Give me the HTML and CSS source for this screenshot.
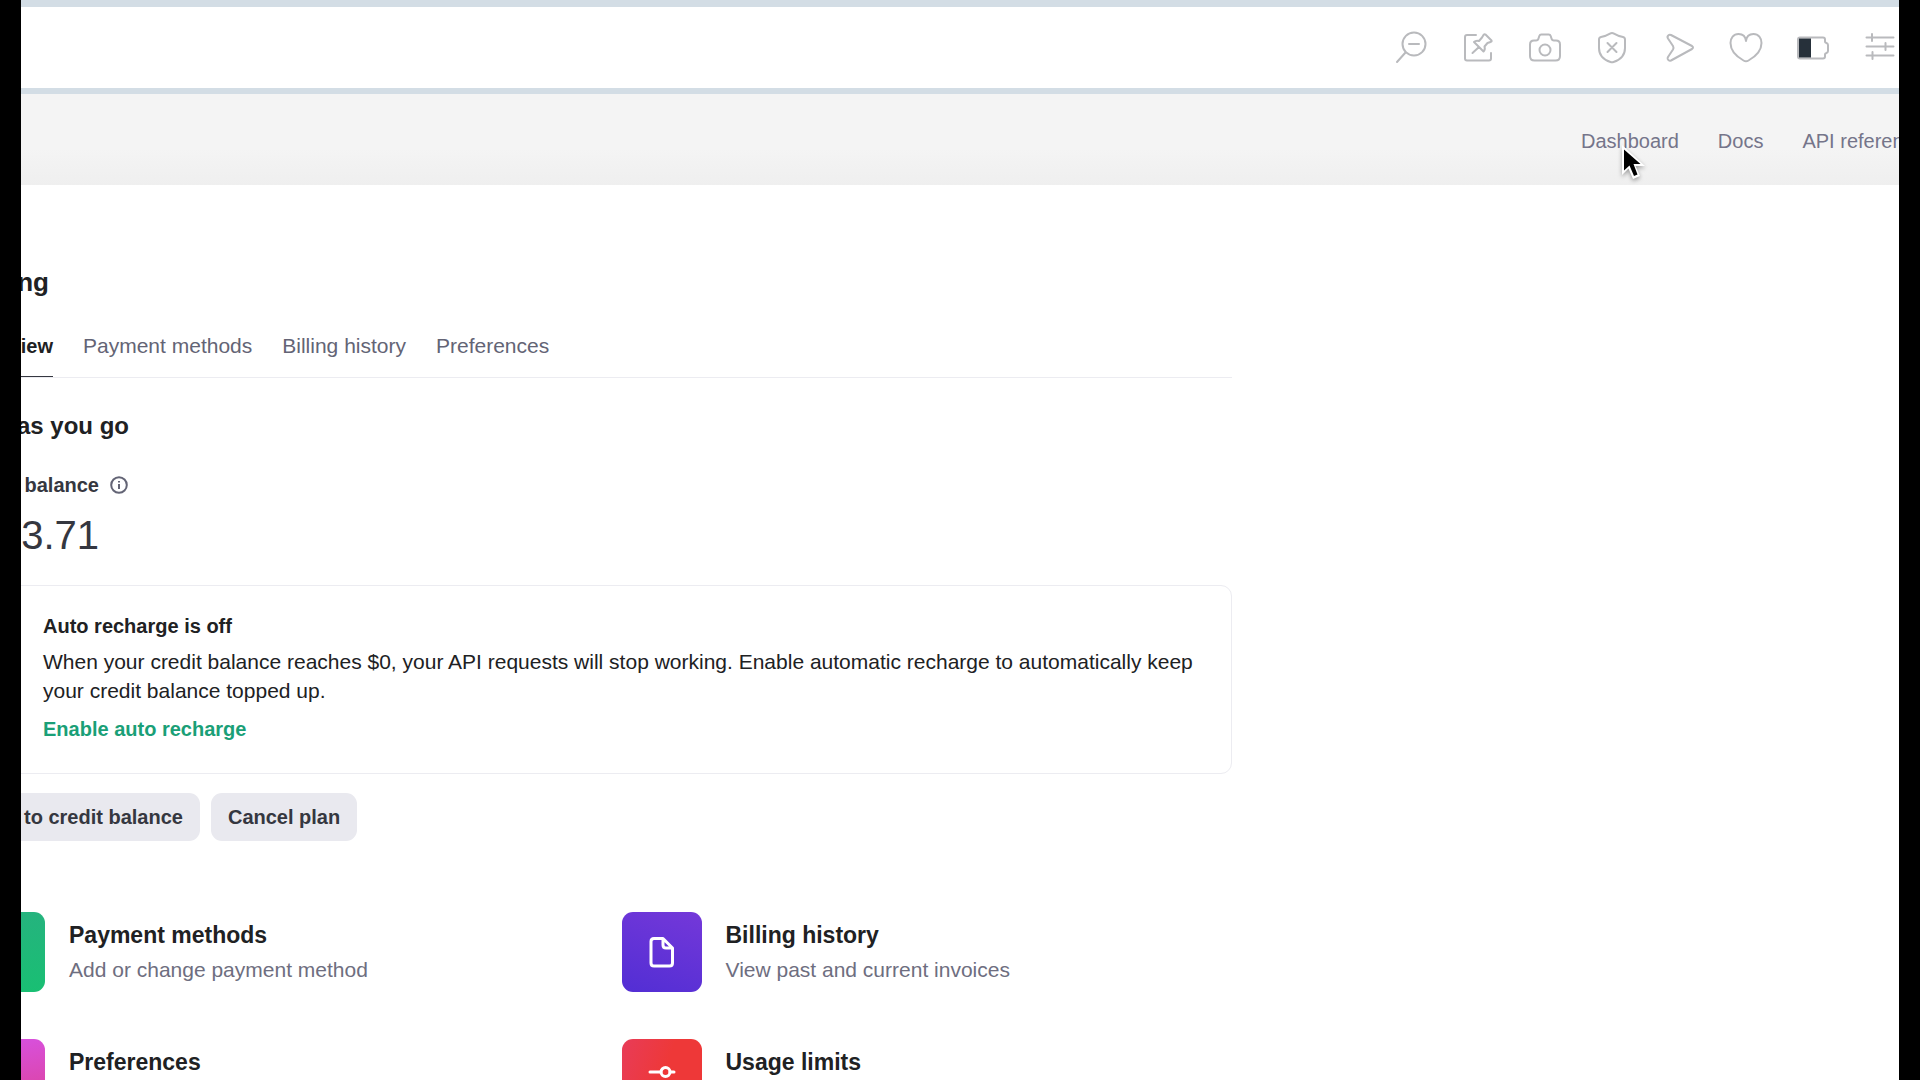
FILE: index.html
```html
<!DOCTYPE html>
<html lang="en">
<head>
<meta charset="utf-8">
<meta name="viewport" content="width=device-width, initial-scale=1">
<title>Billing</title>
<link rel="stylesheet" href="styles.css">
</head>
<body>
<div class="screen">
  <div class="toolbar">
    <button class="tool" type="button"><svg viewBox="0 0 36 36"><circle cx="21" cy="15" r="11.5"/><path d="M12.500 23.500L4 33M16 15h10"/></svg></button>
    <button class="tool" type="button"><svg viewBox="0 0 36 36"><path d="M16 6H7q-2 0-2 2v21.500q0 2 2 2h22q2 0 2-2V24M25.500 5.500l6 6q.6 1.200-1 1.500l-3 1-3 3.500q1 3-1 5L14 13q2-2 5-1l3-3.500 1.500-2.500q1-1.200 2-.5zM19 18l-6.500 6"/></svg></button>
    <button class="tool" type="button"><svg viewBox="0 0 36 36"><path d="M7 11.500h2q2 0 2.500-2l.8-2.500q.5-1.500 2-1.500h7.400q1.500 0 2 1.500l.8 2.500q.5 2 2.500 2h2q4 0 4 4V27q0 4.500-4.500 4.500h-21Q3 31.500 3 27V15.500q0-4 4-4z"/><circle cx="18" cy="21" r="5.500"/></svg></button>
    <button class="tool" type="button"><svg viewBox="0 0 36 36"><path d="M18 4q1 0 2 .6 4 2.400 9 3.400 2 .5 2 2.500V19c0 8-5 12-11.500 14q-1.500.6-3 0C10 31 5 27 5 19v-8.500Q5 8.500 7 8q5-1 9-3.400 1-.6 2-.6zM13.500 14l9 9M22.500 14l-9 9"/></svg></button>
    <button class="tool" type="button"><svg viewBox="0 0 36 36"><path d="M10 6l21 11q2 1.500 0 3L10 31.500q-2.500.8-3.300-1.500-.2-1 .3-2l5-7.500q1-1.700 0-3.500L7 9.500Q5.800 7.500 7.500 6.200q1-.8 2.500-.2z"/></svg></button>
    <button class="tool" type="button"><svg viewBox="0 0 36 36"><path d="M18 12C18.500 7 22 5 25.500 5c5 0 8 4 8 9 0 7-5 13-13 17.500q-2.500 1.500-5 0C7.500 27 2.500 21 2.500 14c0-5 3-9 8-9C14 5 17.500 7 18 12z"/></svg></button>
    <button class="tool" type="button"><svg viewBox="0 0 36 36"><path d="M5 8.500h23q2 0 2 2v2q0 1 1 1.300 2 .7 2 2.200v6q0 1.500-2 2.200-1 .3-1 1.300v2q0 2-2 2H5q-2 0-2-2v-17q0-2 2-2z"/><path class="charge" d="M4 9.500h12v19H4z"/></svg></button>
    <button class="tool" type="button"><svg viewBox="0 0 36 36"><path d="M4.500 8.500h27M4.500 17.500h27M4.500 26.500h27M10 5v7M23.500 14v7M10.500 23v7"/></svg></button>
  </div>

  <header class="site-header">
    <nav class="site-nav">
      <a class="hovered" href="#">Dashboard
        <svg class="cursor" viewBox="0 0 30 40"><path d="M4 4v30l6.500-6.500L15 38l7-3-4.500-10H27z" fill="#fff"/><path d="M6 8.500v21l5.500-5 4.500 10.500 3.500-1.500L15.500 23H22.500z" fill="#000"/></svg>
      </a>
      <a href="#">Docs</a>
      <a href="#">API referen</a>
    </nav>
  </header>

  <main class="billing">
    <h1><span>ng</span></h1>
    <nav class="tabs">
      <a class="active" href="#">iew</a>
      <a href="#">Payment methods</a>
      <a href="#">Billing history</a>
      <a href="#">Preferences</a>
    </nav>

    <h2><span>as you go</span></h2>
    <div class="label">
      <span>t balance</span>
      <svg class="info" viewBox="0 0 18 18"><circle cx="9" cy="9" r="7.800"/><path d="M9 8v5M9 5v1.500"/></svg>
    </div>
    <div class="balance">3.71</div>

    <section class="notice">
      <h3>Auto recharge is off</h3>
      <p>When your credit balance reaches $0, your API requests will stop working. Enable automatic recharge to automatically keep your credit balance topped up.</p>
      <a href="#">Enable auto recharge</a>
    </section>

    <div class="actions">
      <button class="btn cut" type="button">to credit balance</button>
      <button class="btn" type="button">Cancel plan</button>
    </div>

    <div class="tiles">
      <a class="tile" href="#">
        <span class="tile-icon green"></span>
        <span class="tile-text"><strong>Payment methods</strong><span>Add or change payment method</span></span>
      </a>
      <a class="tile" href="#">
        <span class="tile-icon purple"><svg viewBox="0 0 32 32"><path d="M8 2.500h9L26.500 12v15q0 3-3 3H8q-3 0-3-3V5.500q0-3 3-3zM17 2.500V9q0 3 3 3h6.500"/></svg></span>
        <span class="tile-text"><strong>Billing history</strong><span>View past and current invoices</span></span>
      </a>
      <a class="tile" href="#">
        <span class="tile-icon pink"></span>
        <span class="tile-text"><strong>Preferences</strong></span>
      </a>
      <a class="tile" href="#">
        <span class="tile-icon red"><svg viewBox="0 0 32 32"><circle cx="19.500" cy="9" r="4.500"/><circle cx="12" cy="23" r="4.500"/><path d="M4 9h11M24 9h4M4 23h3M17 23h11"/></svg></span>
        <span class="tile-text"><strong>Usage limits</strong></span>
      </a>
    </div>
  </main>
</div>
</body>
</html>
```
FILE: styles.css
```css
* { box-sizing: border-box; }

body {
  margin: 0;
  padding: 0 21px;
  background: #000;
  color: #202123;
  font-family: "Liberation Sans", Arial, sans-serif;
  font-size: 21px;
}

.screen {
  height: 100vh;
  overflow: hidden;
  background: #fff;
}

a { color: inherit; text-decoration: none; }
h1, h2, h3, p { margin: 0; }

/* Browser toolbar */
.toolbar {
  display: flex;
  justify-content: flex-end;
  align-items: center;
  gap: 31px;
  height: 94px;
  padding: 0 1px 2px 0;
  border-top: 7px solid #d3dde5;
  border-bottom: 6px solid #d3dde5;
}

.tool {
  flex: none;
  width: 36px;
  height: 36px;
  padding: 0;
  border: 0;
  background: none;
}

.tool svg {
  display: block;
  fill: none;
  stroke: #b9babd;
  stroke-width: 2;
  stroke-linecap: round;
  stroke-linejoin: round;
}

.tool .charge { fill: #26303a; stroke: none; }

/* Site header */
.site-header {
  height: 91px;
  padding-top: 35px;
  overflow: hidden;
  background: linear-gradient(#f4f4f4 60%, #efefef);
}

.site-nav {
  display: flex;
  gap: 39px;
  width: 318px;
  margin-left: auto;
  font-size: 20px;
  line-height: 24px;
  color: #75758a;
  white-space: nowrap;
}

.hovered { position: relative; }

.cursor {
  position: absolute;
  left: 37px;
  top: 12px;
  width: 30px;
  height: 40px;
  filter: drop-shadow(0 2px 2px rgba(0, 0, 0, .35));
}

/* Billing page */
.billing {
  max-width: 1211px;
  padding-top: 81px;
}

h1, h2 {
  display: flex;
  justify-content: flex-end;
  overflow: hidden;
  line-height: 32px;
  white-space: nowrap;
}

h1 { width: 28px; font-size: 26px; }
h2 { width: 108px; margin-top: 32px; font-size: 24px; }

.tabs {
  display: flex;
  gap: 30px;
  margin-top: 36px;
  border-bottom: 1px solid #ececf1;
  line-height: 24px;
  color: #636475;
}

.tabs a { padding-bottom: 18px; border-bottom: 1px solid transparent; }

.tabs .active {
  display: flex;
  justify-content: flex-end;
  width: 32px;
  border-color: #353740;
  color: #202123;
  font-size: 20px;
  font-weight: 700;
}

.label {
  display: flex;
  justify-content: flex-end;
  align-items: center;
  gap: 11px;
  width: 107px;
  margin-top: 31px;
  font-size: 20px;
  font-weight: 700;
  line-height: 24px;
  color: #353740;
  white-space: nowrap;
}

.info {
  flex: none;
  width: 18px;
  height: 18px;
  fill: none;
  stroke: #636475;
  stroke-width: 2;
}

.balance {
  display: flex;
  justify-content: flex-end;
  width: 78px;
  margin-top: 14px;
  font-size: 40px;
  line-height: 48px;
  color: #353740;
}

.notice {
  margin: 26px 0 0 -56px;
  padding: 26px 32px 30px 77px;
  border: 1px solid #ececf1;
  border-radius: 11px;
}

.notice h3 { font-size: 20px; line-height: 28px; }
.notice p { margin: 7px 0 10px; line-height: 29px; }

.notice a {
  display: block;
  font-size: 20px;
  font-weight: 700;
  line-height: 28px;
  color: #1a9f77;
}

.actions {
  display: flex;
  gap: 11px;
  margin-top: 19px;
}

.btn {
  height: 48px;
  padding: 0 17px;
  border: 0;
  border-radius: 11px;
  background: #e9e9ef;
  color: #353740;
  font-family: inherit;
  font-size: 20px;
  font-weight: 700;
  white-space: nowrap;
}

.cut {
  padding-left: 3px;
  border-radius: 0 11px 11px 0;
}

.tiles {
  display: grid;
  grid-template-columns: 1fr 1fr;
  gap: 47px 46px;
  margin: 71px 0 0 -56px;
}

.tile {
  display: flex;
  gap: 24px;
  color: #202123;
}

.tile-icon {
  display: flex;
  flex: none;
  align-items: center;
  justify-content: center;
  width: 80px;
  height: 80px;
  border-radius: 11px;
}

.tile-icon svg {
  width: 32px;
  height: 32px;
  fill: none;
  stroke: #fff;
  stroke-width: 3;
  stroke-linecap: round;
  stroke-linejoin: round;
}

.green { background: linear-gradient(#25b37e, #19bf73); }
.purple { background: linear-gradient(200deg, #7438d9, #522ed4); }
.pink { background: linear-gradient(170deg, #d752e6, #de3f8c); }
.red { background: linear-gradient(110deg, #e83c58, #ee3838 50%); }

.tile-text {
  display: flex;
  flex-direction: column;
  gap: 5px;
  padding-top: 7px;
  line-height: 28px;
  color: #6e6e80;
}

.tile-text strong {
  font-size: 23px;
  line-height: 32px;
  color: #202123;
}
```
